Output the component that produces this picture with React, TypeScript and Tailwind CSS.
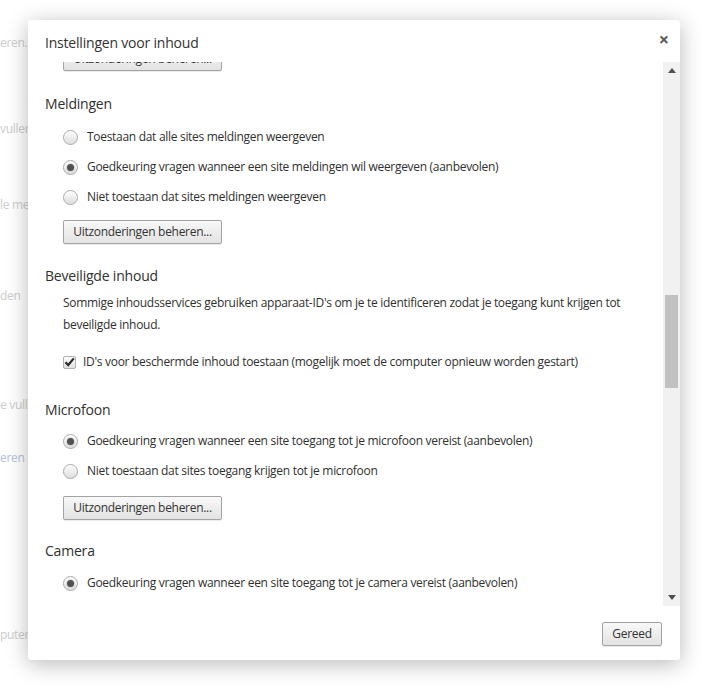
import React from 'react'

const font = { fontFamily: '"Open Sans", "Noto Sans", Arial, sans-serif' }

const Radio = ({ checked }: { checked?: boolean }) => (
  <span className="w-[15px] h-[15px] rounded-full border border-[#a9a9a9] bg-gradient-to-b from-[#fdfdfd] to-[#dedede] flex items-center justify-center shrink-0 shadow-[inset_0_1px_1px_rgba(255,255,255,0.9)]">
    {checked && <span className="w-[7px] h-[7px] rounded-full bg-[#505050] shadow-[0_0_0_1px_rgba(0,0,0,0.08)]" />}
  </span>
)

const RadioRow = ({ label, checked }: { label: string; checked?: boolean }) => (
  <div className="h-[30px] flex items-center pl-[35px] gap-[9px]">
    <Radio checked={checked} />
    <span className="text-[12px] tracking-[-0.3px] text-[#303030] whitespace-nowrap">{label}</span>
  </div>
)

const Button = ({ label, className = '' }: { label: string; className?: string }) => (
  <button
    className={`h-[24px] border border-[#a3a3a3] rounded-[2px] bg-gradient-to-b from-[#f8f8f8] to-[#e3e3e3] text-[12px] tracking-[-0.3px] text-[#333] whitespace-nowrap flex items-center justify-center shadow-[0_1px_0_rgba(0,0,0,0.08)] ${className}`}
  >
    {label}
  </button>
)

const Heading = ({ children, className = '' }: { children: React.ReactNode; className?: string }) => (
  <div className={`h-[20px] flex items-center pl-[17px] text-[14px] tracking-[-0.2px] text-[#303030] ${className}`}>{children}</div>
)

export default function App() {
  const bgTexts = [
    { t: 'eren. ,', mt: 'mt-[34px]' },
    { t: 'vullen', mt: 'mt-[68px]' },
    { t: 'le me', mt: 'mt-[58px]' },
    { t: 'den', mt: 'mt-[73px]' },
    { t: 'e vulle', mt: 'mt-[91px]' },
    { t: 'eren', mt: 'mt-[35px]', blue: true },
    { t: 'puter', mt: 'mt-[159px]' },
  ]

  return (
    <div className="w-[710px] h-[690px] relative bg-white overflow-hidden" style={font}>
      {/* page behind the dialog */}
      <div className="flex flex-col text-[12px] tracking-[-0.3px] text-[#cdcdcd] leading-[18px]">
        {bgTexts.map((b) => (
          <div key={b.t} className={`${b.mt} whitespace-nowrap ${b.blue ? 'text-[#b5c3dc]' : ''}`}>
            {b.t}
          </div>
        ))}
      </div>

      {/* dialog */}
      <div className="absolute left-[28px] top-[20px] w-[652px] h-[640px] bg-white rounded-[3px] shadow-[0_4px_22px_rgba(0,0,0,0.28)] flex flex-col">
        <div className="h-[42px] relative shrink-0">
          <div className="pl-[17px] pt-[12px] text-[14px] tracking-[-0.2px] text-[#333]">Instellingen voor inhoud</div>
          <span className="absolute right-[11px] top-[6px] text-[18px] font-bold text-[#5a5a5a]">×</span>
        </div>

        <div className="h-[544px] flex shrink-0">
          <div className="flex-1 overflow-hidden">
            <div className="-mt-[15px] flex flex-col">
              <Button label="Uitzonderingen beheren..." className="ml-[35px] w-[159px]" />

              <Heading className="mt-[22px]">Meldingen</Heading>
              <div className="mt-[9px]">
                <RadioRow label="Toestaan dat alle sites meldingen weergeven" />
                <RadioRow checked label="Goedkeuring vragen wanneer een site meldingen wil weergeven (aanbevolen)" />
                <RadioRow label="Niet toestaan dat sites meldingen weergeven" />
              </div>
              <Button label="Uitzonderingen beheren..." className="ml-[35px] w-[159px] mt-[8px]" />

              <Heading className="mt-[21px]">Beveiligde inhoud</Heading>
              <p className="mt-[7px] pl-[35px] pr-[20px] text-[12px] tracking-[-0.3px] leading-[22px] text-[#303030]">
                Sommige inhoudsservices gebruiken apparaat-ID's om je te identificeren zodat je toegang kunt krijgen tot
                beveiligde inhoud.
              </p>
              <div className="mt-[11px] h-[30px] flex items-center pl-[35px] gap-[7px]">
                <span className="w-[13px] h-[13px] border border-[#b0b0b0] rounded-[2px] bg-gradient-to-b from-[#fdfdfd] to-[#e0e0e0] flex items-center justify-center shrink-0">
                  <svg width="11" height="10" viewBox="0 0 11 10">
                    <path d="M1.5 5.2 L4.2 8 L9.8 1.4" fill="none" stroke="#2b2b2b" strokeWidth="2.2" />
                  </svg>
                </span>
                <span className="text-[12px] tracking-[-0.3px] text-[#303030] whitespace-nowrap">
                  ID's voor beschermde inhoud toestaan (mogelijk moet de computer opnieuw worden gestart)
                </span>
              </div>

              <Heading className="mt-[22px]">Microfoon</Heading>
              <div className="mt-[7px]">
                <RadioRow checked label="Goedkeuring vragen wanneer een site toegang tot je microfoon vereist (aanbevolen)" />
                <RadioRow label="Niet toestaan dat sites toegang krijgen tot je microfoon" />
              </div>
              <Button label="Uitzonderingen beheren..." className="ml-[35px] w-[159px] mt-[10px]" />

              <Heading className="mt-[20px]">Camera</Heading>
              <div className="mt-[8px]">
                <RadioRow checked label="Goedkeuring vragen wanneer een site toegang tot je camera vereist (aanbevolen)" />
                <RadioRow label="Niet toestaan dat sites toegang krijgen tot je camera" />
              </div>
            </div>
          </div>

          {/* scrollbar */}
          <div className="w-[17px] bg-[#f1f1f1] flex flex-col items-center">
            <div className="h-[17px] flex items-center justify-center">
              <svg width="8" height="5" viewBox="0 0 8 5"><path d="M0 5 L4 0 L8 5 Z" fill="#505050" /></svg>
            </div>
            <div className="mt-[216px] w-[13px] h-[93px] bg-[#c1c1c1]" />
            <div className="flex-1" />
            <div className="h-[17px] flex items-center justify-center">
              <svg width="8" height="5" viewBox="0 0 8 5"><path d="M0 0 L8 0 L4 5 Z" fill="#505050" /></svg>
            </div>
          </div>
        </div>

        <div className="flex-1 flex justify-end items-start pt-[16px] pr-[18px]">
          <Button label="Gereed" className="w-[60px]" />
        </div>
      </div>
    </div>
  )
}
